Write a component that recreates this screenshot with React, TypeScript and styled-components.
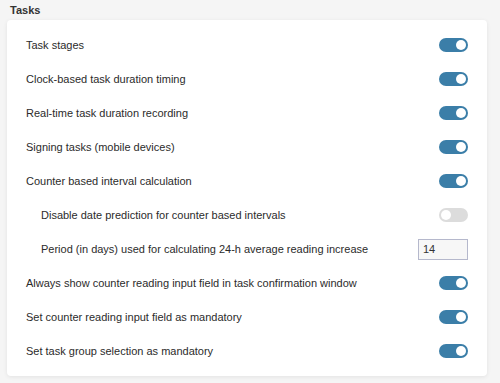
import React from "react";
import styled, { createGlobalStyle } from "styled-components";

const GlobalStyle = createGlobalStyle`
  html, body {
    margin: 0;
    padding: 0;
    background: #f5f5f5;
  }
  body {
    font-family: "Liberation Sans", Arial, sans-serif;
    color: #333;
  }
`;

const Page = styled.div`
  width: 500px;
  height: 383px;
  padding: 5px 13px 0 7px;
  box-sizing: border-box;
`;

const Title = styled.div`
  font-size: 11px;
  font-weight: bold;
  color: #333;
  padding-left: 3px;
  height: 15px;
  line-height: 11px;
`;

const Card = styled.div`
  background: #fff;
  border-radius: 4px;
  box-shadow: 0 1px 4px rgba(0, 0, 0, 0.08);
  padding: 8px 19px;
`;

const Row = styled.div<{ $indent?: boolean }>`
  display: flex;
  align-items: center;
  justify-content: space-between;
  height: 34px;
  padding-left: ${(p) => (p.$indent ? "15px" : "0")};
`;

const Label = styled.span`
  font-size: 11px;
  color: #2b2b2b;
`;

const Track = styled.div<{ $on: boolean }>`
  width: 29px;
  height: 14px;
  border-radius: 7px;
  background: ${(p) => (p.$on ? "#3b7ea8" : "#dcdcdc")};
  position: relative;
  flex-shrink: 0;
`;

const Knob = styled.div<{ $on: boolean }>`
  position: absolute;
  top: 2px;
  left: ${(p) => (p.$on ? "17px" : "2px")};
  width: 10px;
  height: 10px;
  border-radius: 50%;
  background: #fff;
`;

const NumberInput = styled.input`
  width: 50px;
  height: 21px;
  box-sizing: border-box;
  border: 1px solid #b5b8cc;
  background: #f7f7f7;
  font-family: "Liberation Sans", Arial, sans-serif;
  font-size: 11px;
  color: #333;
  padding: 0 4px;
  outline: none;
`;

const Toggle = ({ on }: { on: boolean }) => (
  <Track $on={on}>
    <Knob $on={on} />
  </Track>
);

type Item =
  | { label: string; on: boolean; indent?: boolean }
  | { label: string; value: string; indent?: boolean };

const items: Item[] = [
  { label: "Task stages", on: true },
  { label: "Clock-based task duration timing", on: true },
  { label: "Real-time task duration recording", on: true },
  { label: "Signing tasks (mobile devices)", on: true },
  { label: "Counter based interval calculation", on: true },
  { label: "Disable date prediction for counter based intervals", on: false, indent: true },
  { label: "Period (in days) used for calculating 24-h average reading increase", value: "14", indent: true },
  { label: "Always show counter reading input field in task confirmation window", on: true },
  { label: "Set counter reading input field as mandatory", on: true },
  { label: "Set task group selection as mandatory", on: true },
];

const App = () => {
  return (
    <>
      <GlobalStyle />
      <Page>
        <Title>Tasks</Title>
        <Card>
          {items.map((it) => (
            <Row key={it.label} $indent={it.indent}>
              <Label>{it.label}</Label>
              {"value" in it ? (
                <NumberInput defaultValue={it.value} />
              ) : (
                <Toggle on={it.on} />
              )}
            </Row>
          ))}
        </Card>
      </Page>
    </>
  );
};

export default App;
